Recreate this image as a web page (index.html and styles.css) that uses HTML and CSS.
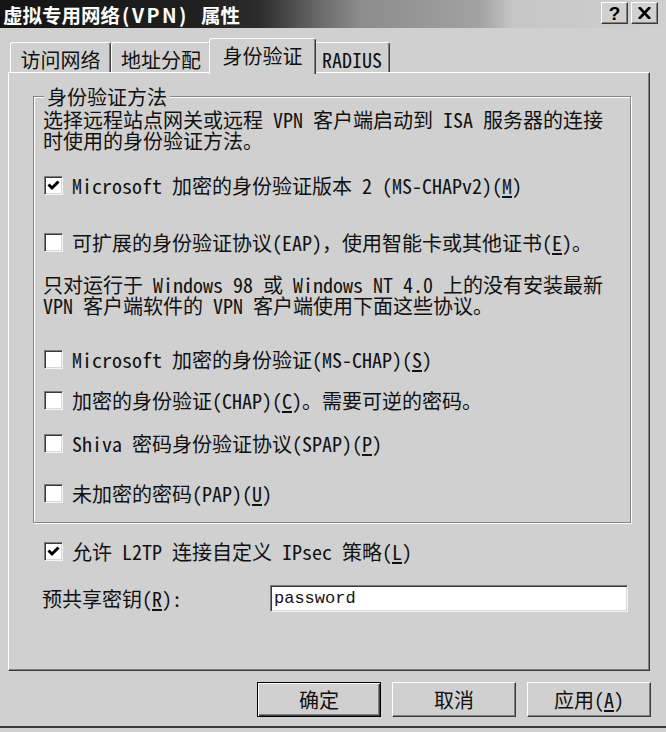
FILE: index.html
```html
<!DOCTYPE html>
<html lang="zh-CN">
<head>
<meta charset="utf-8">
<title>虚拟专用网络(VPN) 属性</title>
<link rel="stylesheet" href="styles.css">
</head>
<body>
<div class="window">
  <div class="titlebar">
    <div class="title">虚拟专用网络<span class="vpn">(VPN)</span>属性</div>
    <div class="caption-btns">
      <div class="cap-btn">?</div>
      <div class="cap-btn">
        <svg width="13" height="12" viewBox="0 0 13 12"><path d="M1 0 L12 12 M12 0 L1 12" stroke="#000" stroke-width="2.6"/></svg>
      </div>
    </div>
  </div>

  <div class="tabs">
    <div class="tab t1">访问网络</div>
    <div class="tab t2">地址分配</div>
    <div class="tab t3 selected">身份验证</div>
    <div class="tab t4">RADIUS</div>
  </div>

  <div class="panel">
    <div class="group">
      <div class="legend">身份验证方法</div>
      <div class="desc">选择远程站点网关或远程 VPN 客户端启动到 ISA 服务器的连接<br>时使用的身份验证方法。</div>

      <div class="cbrow r1">
        <span class="cb"><svg width="17" height="17" viewBox="0 0 17 17"><polyline points="3.5,7.5 7,11 13.5,4.5" fill="none" stroke="#000" stroke-width="3"/></svg></span>
        <span class="lbl">Microsoft 加密的身份验证版本 2 (MS-CHAPv2)(<u>M</u>)</span>
      </div>
      <div class="cbrow r2">
        <span class="cb"></span>
        <span class="lbl">可扩展的身份验证协议(EAP)，使用智能卡或其他证书(<u>E</u>)。</span>
      </div>

      <div class="para">只对运行于 Windows 98 或 Windows NT 4.0 上的没有安装最新<br>VPN 客户端软件的 VPN 客户端使用下面这些协议。</div>

      <div class="cbrow r3">
        <span class="cb"></span>
        <span class="lbl">Microsoft 加密的身份验证(MS-CHAP)(<u>S</u>)</span>
      </div>
      <div class="cbrow r4">
        <span class="cb"></span>
        <span class="lbl">加密的身份验证(CHAP)(<u>C</u>)。需要可逆的密码。</span>
      </div>
      <div class="cbrow r5">
        <span class="cb"></span>
        <span class="lbl">Shiva 密码身份验证协议(SPAP)(<u>P</u>)</span>
      </div>
      <div class="cbrow r6">
        <span class="cb"></span>
        <span class="lbl">未加密的密码(PAP)(<u>U</u>)</span>
      </div>
    </div>

    <div class="cbrow l2tp">
      <span class="cb"><svg width="17" height="17" viewBox="0 0 17 17"><polyline points="3.5,7.5 7,11 13.5,4.5" fill="none" stroke="#000" stroke-width="3"/></svg></span>
      <span class="lbl">允许 L2TP 连接自定义 IPsec 策略(<u>L</u>)</span>
    </div>

    <div class="psk">
      <span class="psk-label">预共享密钥(<u>R</u>):</span>
      <div class="field">password</div>
    </div>
  </div>

  <div class="buttons">
    <div class="btn default">确定</div>
    <div class="btn">取消</div>
    <div class="btn">应用(<u>A</u>)</div>
  </div>
</div>
</body>
</html>
```
FILE: styles.css
```css
html, body {
  margin: 0;
  padding: 0;
  background: #d0d0d0;
}

body {
  font-family: "Noto Sans Mono CJK SC", "Liberation Mono", "Noto Sans CJK SC", monospace;
  font-size: 20px;
  line-height: 21px;
  color: #111;
}

.window {
  width: 666px;
  height: 728px;
  box-sizing: border-box;
  border-bottom: 2px solid #3a3a3a;
  display: flex;
  flex-direction: column;
  background: #d0d0d0;
}

/* title bar */
.titlebar {
  height: 28px;
  flex: 0 0 28px;
  display: flex;
  align-items: center;
  justify-content: space-between;
  padding: 0 8px 0 3px;
  background: linear-gradient(90deg, #141414 0%, #202020 30%, #2c2c2c 39%, #6a6a6a 48%, #8c8c8c 54%, #a2a2a2 72%, #c6c6c6 77%, #cfcfcf 100%);
}

.title {
  font-family: "Noto Sans CJK SC", sans-serif;
  font-weight: bold;
  font-size: 19.5px;
  color: #fff;
  white-space: nowrap;
}

.title .vpn {
  letter-spacing: 2.5px;
  padding: 0 12px 0 2px;
}

.caption-btns {
  display: flex;
  gap: 3px;
  margin-top: -2px;
}

.cap-btn {
  width: 27px;
  height: 22px;
  box-sizing: border-box;
  background: #d0d0d0;
  border: 1px solid;
  border-color: #fff #3a3a3a #3a3a3a #fff;
  box-shadow: inset -1px -1px 0 #808080;
  display: flex;
  align-items: center;
  justify-content: center;
  font-family: "Liberation Sans", sans-serif;
  font-weight: bold;
  font-size: 19px;
  color: #000;
}

/* tabs */
.tabs {
  height: 44px;
  flex: 0 0 44px;
  display: flex;
  align-items: flex-end;
  padding-left: 10px;
}

.tab {
  height: 30px;
  box-sizing: border-box;
  border-top: 1px solid #fff;
  border-left: 1px solid #fff;
  border-right: 1px solid #3a3a3a;
  border-top-left-radius: 3px;
  border-top-right-radius: 3px;
  box-shadow: inset -1px 0 0 #808080;
  padding-top: 6px;
  line-height: 22px;
  text-align: center;
  white-space: nowrap;
  background: #d0d0d0;
}

.t1 { width: 101px; }
.t2 { width: 100px; }
.t3 { width: 103px; }
.t4 { width: 76px; }

.tab.selected {
  position: relative;
  z-index: 1;
  height: 36px;
  margin: 0 -2px -2px -2px;
  width: 107px;
  padding-top: 6px;
}

/* panel */
.panel {
  margin-left: 8px;
  width: 642px;
  height: 599px;
  flex: 0 0 599px;
  box-sizing: border-box;
  border: 1px solid;
  border-color: #fff #3a3a3a #3a3a3a #fff;
  box-shadow: inset -1px -1px 0 #808080;
  padding: 0 18px 0 24px;
  display: flex;
  flex-direction: column;
  white-space: nowrap;
}

.group {
  margin-top: 23px;
  border: 1px solid #858585;
  box-shadow: 1px 1px 0 #fff, inset 1px 1px 0 #fff;
  padding: 0 9px 18px 9px;
  display: flex;
  flex-direction: column;
  align-items: flex-start;
}

.legend {
  margin-top: -11px;
  margin-left: 1px;
  padding: 0 3px;
  background: #d0d0d0;
  line-height: 21px;
  position: relative;
}

.desc { margin-top: 2px; }

.cbrow {
  display: flex;
  align-items: center;
  gap: 9px;
  height: 21px;
  margin-left: 1px;
}

.r1 { margin-top: 24px; }
.r2 { margin-top: 36px; }
.para { margin-top: 21px; }
.r3 { margin-top: 33px; }
.r4 { margin-top: 20px; }
.r5 { margin-top: 22px; }
.r6 { margin-top: 29px; }

.cb {
  width: 19px;
  height: 19px;
  flex: 0 0 19px;
  box-sizing: border-box;
  background: #fff;
  border: 1px solid;
  border-color: #7a7a7a #f4f4f4 #f4f4f4 #7a7a7a;
  box-shadow: inset 1px 1px 0 #3a3a3a, inset -1px -1px 0 #d8d8d8;
  display: flex;
  align-items: center;
  justify-content: center;
}

.cb svg { display: block; }

.l2tp {
  margin-top: 18px;
  margin-left: 11px;
}

.psk {
  margin-top: 23px;
  margin-left: 9px;
  display: flex;
  align-items: center;
  height: 27px;
}

.psk-label {
  width: 228px;
  flex: 0 0 228px;
}

.field {
  width: 358px;
  height: 27px;
  box-sizing: border-box;
  background: #fff;
  border: 1px solid;
  border-color: #7a7a7a #f4f4f4 #f4f4f4 #7a7a7a;
  box-shadow: inset 1px 1px 0 #3a3a3a, inset -1px -1px 0 #d8d8d8;
  padding: 2px 0 0 3px;
  font-family: "Liberation Mono", monospace;
  font-size: 17px;
  line-height: 22px;
  color: #111;
}

/* buttons */
.buttons {
  margin-top: 11px;
  display: flex;
  justify-content: flex-end;
  gap: 11px;
  padding-right: 15px;
}

.btn {
  width: 124px;
  height: 35px;
  box-sizing: border-box;
  border: 1px solid;
  border-color: #fff #3a3a3a #3a3a3a #fff;
  box-shadow: inset -1px -1px 0 #808080;
  display: flex;
  align-items: center;
  justify-content: center;
  white-space: nowrap;
}

.btn.default {
  border: 1px solid #000;
  box-shadow: inset 1px 1px 0 #fff, inset -1px -1px 0 #3a3a3a, inset -2px -2px 0 #808080;
}

u { text-underline-offset: 2px; }
```
